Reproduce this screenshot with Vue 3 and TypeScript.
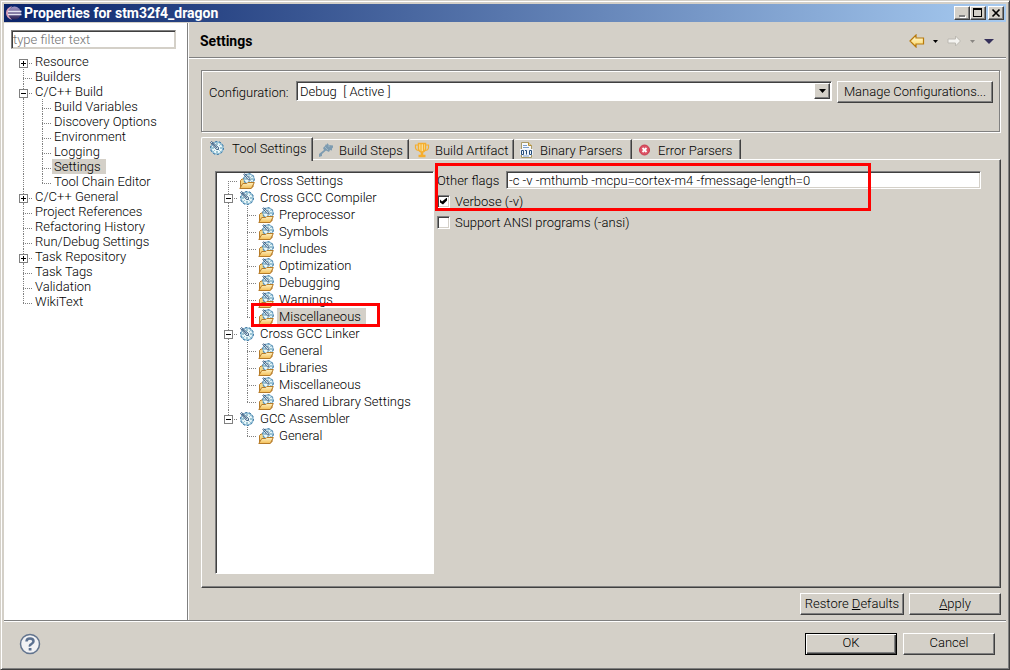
<script setup lang="ts">
import { ref } from 'vue'

type Guide = 'blank' | 'pass' | 'first' | 'tee' | 'end'

interface TreeRow {
  label: string
  guides: Guide[]
  open?: boolean
  toggle?: boolean
  icon?: 'gauge' | 'folder'
  selected?: boolean
  marked?: boolean
}

interface Tab {
  id: string
  label: string
}

const pages: TreeRow[] = [
  { label: 'Resource', guides: ['first'], toggle: true },
  { label: 'Builders', guides: ['tee'] },
  { label: 'C/C++ Build', guides: ['tee'], toggle: true, open: true },
  { label: 'Build Variables', guides: ['pass', 'tee'] },
  { label: 'Discovery Options', guides: ['pass', 'tee'] },
  { label: 'Environment', guides: ['pass', 'tee'] },
  { label: 'Logging', guides: ['pass', 'tee'] },
  { label: 'Settings', guides: ['pass', 'tee'], selected: true },
  { label: 'Tool Chain Editor', guides: ['pass', 'end'] },
  { label: 'C/C++ General', guides: ['tee'], toggle: true },
  { label: 'Project References', guides: ['tee'] },
  { label: 'Refactoring History', guides: ['tee'] },
  { label: 'Run/Debug Settings', guides: ['tee'] },
  { label: 'Task Repository', guides: ['tee'], toggle: true },
  { label: 'Task Tags', guides: ['tee'] },
  { label: 'Validation', guides: ['tee'] },
  { label: 'WikiText', guides: ['end'] },
]

const tools: TreeRow[] = [
  { label: 'Cross Settings', guides: ['first'], icon: 'folder' },
  { label: 'Cross GCC Compiler', guides: ['tee'], toggle: true, open: true, icon: 'gauge' },
  { label: 'Preprocessor', guides: ['pass', 'tee'], icon: 'folder' },
  { label: 'Symbols', guides: ['pass', 'tee'], icon: 'folder' },
  { label: 'Includes', guides: ['pass', 'tee'], icon: 'folder' },
  { label: 'Optimization', guides: ['pass', 'tee'], icon: 'folder' },
  { label: 'Debugging', guides: ['pass', 'tee'], icon: 'folder' },
  { label: 'Warnings', guides: ['pass', 'tee'], icon: 'folder' },
  { label: 'Miscellaneous', guides: ['pass', 'end'], icon: 'folder', selected: true, marked: true },
  { label: 'Cross GCC Linker', guides: ['tee'], toggle: true, open: true, icon: 'gauge' },
  { label: 'General', guides: ['pass', 'tee'], icon: 'folder' },
  { label: 'Libraries', guides: ['pass', 'tee'], icon: 'folder' },
  { label: 'Miscellaneous', guides: ['pass', 'tee'], icon: 'folder' },
  { label: 'Shared Library Settings', guides: ['pass', 'end'], icon: 'folder' },
  { label: 'GCC Assembler', guides: ['end'], toggle: true, open: true, icon: 'gauge' },
  { label: 'General', guides: ['blank', 'end'], icon: 'folder' },
]

const tabs: Tab[] = [
  { id: 'gauge', label: 'Tool Settings' },
  { id: 'steps', label: 'Build Steps' },
  { id: 'trophy', label: 'Build Artifact' },
  { id: 'binary', label: 'Binary Parsers' },
  { id: 'error', label: 'Error Parsers' },
]

const activeTab = ref('gauge')
const filter = ref('')
const flags = ref('-c -v -mthumb -mcpu=cortex-m4 -fmessage-length=0')
const verbose = ref(true)
const ansi = ref(false)
const configuration = ref('debug')
</script>

<template>
  <div class="window">
    <svg class="defs" aria-hidden="true">
      <defs>
        <linearGradient id="folder-fill" x1="0" y1="0" x2="0" y2="1">
          <stop offset="0" stop-color="#fff3c4" />
          <stop offset="1" stop-color="#f3bd55" />
        </linearGradient>
        <linearGradient id="arrow-fill" x1="0" y1="0" x2="0" y2="1">
          <stop offset="0" stop-color="#fffbe0" />
          <stop offset="1" stop-color="#fbd55e" />
        </linearGradient>
        <linearGradient id="globe-fill" x1="0" y1="0" x2="0" y2="1">
          <stop offset="0" stop-color="#a39ac8" />
          <stop offset="1" stop-color="#2c2255" />
        </linearGradient>
        <symbol id="gauge" viewBox="0 0 16 16">
          <circle cx="8" cy="8" r="6" fill="#eaf7fa" stroke="#8dbbd4" stroke-width="1.500" />
          <circle cx="8" cy="8" r="6.500" fill="none" stroke="#3c77a3" stroke-width="1" stroke-dasharray="2 2" />
          <path d="M8 3v2M8 11v2M3 8h2M11 8h2M4.500 11.500l1-1M10.500 5.500l1-1M10.500 10.500l1 1" stroke="#4f93ab" fill="none" />
          <path d="M1.500 2.500l1-1 7 6v2h-2z" fill="#cfe0ea" stroke="#33557a" stroke-width=".9" />
          <path d="M3 3l5 5" stroke="#33557a" stroke-width=".8" />
        </symbol>
        <symbol id="folder" viewBox="0 0 16 16">
          <path d="M1.500 14V7.500L3 6h3l1 2h7v6z" fill="#f6d684" stroke="#b67b28" />
          <circle cx="10" cy="6" r="5" fill="#eaf7fa" stroke="#8dbbd4" stroke-width="1.300" />
          <circle cx="10" cy="6" r="5.300" fill="none" stroke="#3c77a3" stroke-width="1" stroke-dasharray="2 2" />
          <path d="M10 2.500v1.500M10 8v2M12 6h2M6 6h2M11.500 4.500l1-1M11.500 7.500l1 1" stroke="#4f93ab" fill="none" />
          <path d="M4.800 1.500l.8-.8 5.400 4.800v1.500H9.500z" fill="#cfe0ea" stroke="#33557a" stroke-width=".9" />
          <path d="M.8 15.500l3-5h4l1-1h6.500l-3 6z" fill="url(#folder-fill)" stroke="#b67b28" />
        </symbol>
        <symbol id="steps" viewBox="0 0 16 16">
          <path d="M1 15v-3l5-4-1-2 2-2 1-2 1 1V1l2 2 4 .5v2l-1 1v2l-2-.5-1 2-3-1.500-4 3.500v2z" fill="#7d9bb0" />
          <path d="M7 5l3 3M10 4h2" stroke="#a9bfcd" stroke-width=".8" />
        </symbol>
        <symbol id="trophy" viewBox="0 0 16 16">
          <path d="M4.500 1.500h7V7Q11 10 8 10T4.500 7z" fill="#fbe3a0" stroke="#f5ae2e" stroke-width="1.500" />
          <path d="M4 3H1.500v3q.5 2.500 3.500 2.500M12 3h2.500v3q-.5 2.500-3.500 2.500M7 2v7M9.500 2v7" fill="none" stroke="#f5ae2e" stroke-width="1.200" />
          <path d="M8 10v4M4.500 14h7" stroke="#f5ae2e" stroke-width="2.500" />
        </symbol>
        <symbol id="binary" viewBox="0 0 16 16">
          <path d="M2.500.500h7l3 3v12h-10z" fill="#f7f9fc" stroke="#a99a67" />
          <path d="M9.500.500v3h3" fill="#e7d49a" stroke="#b68e35" />
          <path d="M4 3.500h4M4 5.500h6M4 14h6" stroke="#7c9fca" />
          <path d="M1 7h13v6H1z" fill="#eef3f8" />
          <path d="M2.500 8.500h2v4h-2zM6 8.500h1.500v4M10.500 8.500h2v4h-2z" fill="none" stroke="#254d7b" />
        </symbol>
        <symbol id="error" viewBox="0 0 16 16">
          <circle cx="7.500" cy="8" r="5" fill="#dc5265" stroke="#c83a4c" />
          <path d="M5.500 6l4 4M9.500 6l-4 4" stroke="#fff" stroke-width="1.800" />
        </symbol>
      </defs>
    </svg>

    <header class="titlebar">
      <svg class="app-icon" viewBox="0 0 16 16" aria-hidden="true">
        <path d="M6 1Q0 3 0 8t6 7Q3 12 3 8t3-7z" fill="#d9a0b8" />
        <circle cx="8.500" cy="8" r="6.500" fill="url(#globe-fill)" />
        <path d="M2 6.500h13.500M2 9.500h13.500" stroke="#e4e4f2" stroke-width="1.300" />
      </svg>
      <h1>Properties for stm32f4_dragon</h1>
      <button class="caption" type="button" aria-label="Minimize">
        <svg viewBox="0 0 12 10"><path d="M4 8h6v2H4z" fill="#fff" /><path d="M3 7h6v2H3z" fill="#808080" /></svg>
      </button>
      <button class="caption" type="button" aria-label="Maximize">
        <svg viewBox="0 0 12 10"><path d="M1 0h9v9H1zM2 2v6h7V2z" fill-rule="evenodd" /></svg>
      </button>
      <button class="caption close" type="button" aria-label="Close">
        <svg viewBox="0 0 12 10"><path d="M2.500 1.500l7 7M9.500 1.500l-7 7" stroke="#000" stroke-width="1.700" /></svg>
      </button>
    </header>

    <div class="body">
      <nav class="sidebar">
        <input v-model="filter" class="field filter" type="text" placeholder="type filter text" aria-label="Filter" />
        <ul class="tree pages">
          <li v-for="row in pages" :key="row.label" class="row">
            <span v-for="(guide, i) in row.guides" :key="i" class="guide" :class="guide">
              <button
                v-if="row.toggle && i === row.guides.length - 1"
                class="toggle"
                :class="{ open: row.open }"
                type="button"
                :aria-label="'Toggle ' + row.label"
              ></button>
            </span>
            <span class="label" :class="{ selected: row.selected }">{{ row.label }}</span>
          </li>
        </ul>
      </nav>

      <main class="content">
        <div class="heading">
          <h2>Settings</h2>
          <div class="history">
            <button class="flat" type="button" aria-label="Back">
              <svg class="arrow" viewBox="0 0 16 14"><path d="M1 7l6-6v3h7.500v6H7v3z" fill="url(#arrow-fill)" stroke="#b87a0c" stroke-width="1.200" /></svg>
            </button>
            <button class="flat" type="button" aria-label="Back history">
              <svg class="drop" viewBox="0 0 5 3"><path d="M0 0h5L2.500 3z" /></svg>
            </button>
            <button class="flat" type="button" aria-label="Forward">
              <svg class="arrow" viewBox="0 0 16 14"><path d="M14.500 7l-5-5v3H2v4h7.500v3z" fill="#f4f3f0" stroke="#bcb9b2" /></svg>
            </button>
            <button class="flat" type="button" aria-label="Forward history">
              <svg class="drop" viewBox="0 0 5 3"><path d="M0 0h5L2.500 3z" fill="#898682" /></svg>
            </button>
            <button class="flat" type="button" aria-label="Menu">
              <svg class="menu" viewBox="0 0 10 5"><path d="M0 0h10L5 5z" fill="#35305a" /></svg>
            </button>
          </div>
        </div>

        <div class="page">
          <section class="config">
            <label for="configuration">Configuration:</label>
            <div class="combo">
              <select id="configuration" v-model="configuration">
                <option value="debug">Debug&nbsp; [ Active ]</option>
              </select>
              <span class="combo-arrow" aria-hidden="true">
                <svg viewBox="0 0 7 4"><path d="M0 0h7L3.500 4z" /></svg>
              </span>
            </div>
            <button class="push manage" type="button">Manage Configurations...</button>
          </section>

          <div class="tabs" role="tablist">
            <button
              v-for="tab in tabs"
              :key="tab.id"
              class="tab"
              :class="{ active: tab.id === activeTab }"
              type="button"
              role="tab"
              :aria-selected="tab.id === activeTab"
              @click="activeTab = tab.id"
            >
              <svg class="icon" aria-hidden="true"><use :href="'#' + tab.id" /></svg>
              <span>{{ tab.label }}</span>
            </button>
          </div>

          <section class="panel">
            <ul class="tree tools">
              <li v-for="(row, n) in tools" :key="n" class="row">
                <span v-for="(guide, i) in row.guides" :key="i" class="guide" :class="guide">
                  <button
                    v-if="row.toggle && i === row.guides.length - 1"
                    class="toggle"
                    :class="{ open: row.open }"
                    type="button"
                    :aria-label="'Toggle ' + row.label"
                  ></button>
                </span>
                <svg class="icon" aria-hidden="true"><use :href="'#' + row.icon" /></svg>
                <span class="label" :class="{ selected: row.selected }">{{ row.label }}</span>
                <span v-if="row.marked" class="mark row-mark"></span>
              </li>
            </ul>
            <form class="options" @submit.prevent>
              <div class="option">
                <label class="flags-label" for="flags">Other flags</label>
                <input id="flags" v-model="flags" class="field flags" type="text" spellcheck="false" />
              </div>
              <label class="option check"><input v-model="verbose" type="checkbox" />Verbose (-v)</label>
              <label class="option check"><input v-model="ansi" type="checkbox" />Support ANSI programs (-ansi)</label>
              <span class="mark form-mark"></span>
            </form>
          </section>

          <div class="page-actions">
            <button class="push restore" type="button">Restore <u>D</u>efaults</button>
            <button class="push apply" type="button"><u>A</u>pply</button>
          </div>
        </div>
      </main>
    </div>

    <footer class="footer">
      <button class="flat help" type="button" aria-label="Help">
        <svg viewBox="0 0 22 22">
          <circle cx="11" cy="11" r="9.500" fill="#f2f2f4" stroke="#62748e" stroke-width="1.500" />
          <path d="M7.500 8.500Q7.500 5.500 11 5.500t3.500 2.800Q14.500 10 12.500 11T11 13.500" fill="none" stroke="#5c7190" stroke-width="2.500" />
          <rect x="9.700" y="15" width="2.800" height="2.500" fill="#5c7190" />
        </svg>
      </button>
      <button class="push default" type="button">OK</button>
      <button class="push cancel" type="button">Cancel</button>
    </footer>
  </div>
</template>

<style>
html,
body {
  margin: 0;
  background: #d4d0c8;
}
</style>

<style scoped>
* {
  box-sizing: border-box;
}

.window {
  display: flex;
  flex-direction: column;
  min-height: 100vh;
  padding: 2px;
  border: 1px solid;
  border-color: #d4d0c8 #404040 #404040 #d4d0c8;
  box-shadow: inset 1px 1px #fff, inset -1px -1px #808080;
  background: #d4d0c8;
  color: #000;
  font: 300 13px/15px Roboto, "Liberation Sans", sans-serif;
  white-space: nowrap;
}

button,
input,
select {
  font: inherit;
  color: inherit;
}

button {
  padding: 0;
  border: 0;
  border-radius: 0;
  background: #d4d0c8;
}

svg {
  display: block;
}

.defs {
  position: absolute;
  width: 0;
  height: 0;
}

.icon {
  flex: none;
  width: 16px;
  height: 16px;
}

.titlebar {
  display: flex;
  align-items: center;
  height: 18px;
  margin: 1px 1px 0;
  padding: 0 2px;
  background: linear-gradient(to right, #0a246a, #a6caf0);
  color: #fff;
}

.app-icon {
  width: 16px;
  height: 16px;
  margin-right: 2px;
}

h1,
h2 {
  margin: 0;
  flex: 1;
  font: bold 14px/16px Roboto, "Liberation Sans", sans-serif;
}

.caption,
.push,
.combo-arrow {
  border: 1px solid;
  border-color: #fff #404040 #404040 #fff;
  box-shadow: inset -1px -1px #808080;
}

.caption {
  width: 16px;
  height: 14px;
  padding: 1px;
}

.caption svg {
  width: 12px;
  height: 10px;
}

.close {
  margin-left: 2px;
}

.body {
  display: flex;
  flex: 1;
  margin: 1px 1px 0;
  border-bottom: 1px solid #808080;
}

.sidebar {
  flex: none;
  width: 184px;
  padding: 7px;
  border-right: 1px solid #808080;
  background: #fff;
}

.field {
  display: block;
  min-width: 0;
  height: 19px;
  padding: 0 1px;
  border: 1px solid;
  border-color: #808080 #fff #fff #808080;
  border-radius: 0;
  box-shadow: inset 1px 1px #404040, inset -1px -1px #d4d0c8;
  background: #fff;
  outline: 0;
}

.filter {
  width: 165px;
  border-color: #808080 #d4d0c8 #d4d0c8 #808080;
}

.filter::placeholder {
  color: #707070;
  opacity: 1;
}

.tree {
  margin: 0;
  padding: 0;
  list-style: none;
}

.pages {
  padding: 5px 3px;
}

.row {
  position: relative;
  display: flex;
  height: 15px;
}

.guide {
  --line: repeating-linear-gradient(to bottom, #808080 0 1px, transparent 1px 2px);
  --dash: repeating-linear-gradient(to right, #808080 0 1px, transparent 1px 2px);
  flex: none;
  width: 19px;
  padding: 5px;
  background-repeat: no-repeat;
}

.pass {
  background-image: var(--line);
  background-size: 1px 100%;
  background-position: 9px 0;
}

.tee,
.first,
.end {
  background-image: var(--line), var(--dash);
  background-size: 1px 100%, 10px 1px;
  background-position: 9px 0, 9px 9px;
}

.first {
  background-size: 1px 8px, 10px 1px;
  background-position: 9px 9px, 9px 9px;
}

.end {
  background-size: 1px 9px, 10px 1px;
}

.toggle {
  display: block;
  width: 9px;
  height: 9px;
  border: 1px solid #808080;
  background: linear-gradient(#000, #000) center / 5px 1px no-repeat,
    linear-gradient(#000, #000) center / 1px 5px no-repeat, #fff;
}

.toggle.open {
  background: linear-gradient(#000, #000) center / 5px 1px no-repeat, #fff;
}

.label {
  padding: 0 2px;
}

.selected {
  padding-right: 5px;
  background: #d4d0c8;
}

.content {
  display: flex;
  flex: 1;
  flex-direction: column;
  min-width: 0;
  border-left: 1px solid #fff;
}

.heading {
  display: flex;
  align-items: center;
  height: 35px;
  padding: 2px 12px 0 11px;
  border-bottom: 1px solid #808080;
  box-shadow: 0 1px #fff;
}

.history {
  display: flex;
  align-items: center;
}

.flat {
  background: none;
}

.arrow {
  width: 16px;
  height: 14px;
}

.drop {
  width: 5px;
  height: 3px;
  margin: 0 8px;
}

.menu {
  width: 10px;
  height: 5px;
  margin-left: 1px;
}

.page {
  display: flex;
  flex: 1;
  flex-direction: column;
  padding: 12px 5px 5px 12px;
}

.config {
  display: flex;
  gap: 5px;
  height: 62px;
  margin-right: 1px;
  padding: 10px 6px 10px 7px;
  border: 1px solid #808080;
  box-shadow: 1px 1px #fff, inset 1px 1px #fff;
}

.config label {
  width: 82px;
  padding-top: 4px;
}

.combo {
  display: flex;
  flex: 1;
  height: 20px;
  padding: 1px;
  border: 1px solid;
  border-color: #808080 #fff #fff #808080;
  box-shadow: inset 1px 1px #404040;
  background: #fff;
}

.combo select {
  flex: 1;
  min-width: 0;
  padding: 0 2px;
  border: 0;
  background: #fff;
  appearance: none;
  outline: 0;
}

.combo-arrow {
  display: grid;
  place-items: center;
  width: 16px;
  background: #d4d0c8;
  pointer-events: none;
}

.combo-arrow svg {
  width: 7px;
  height: 4px;
}

.push {
  height: 22px;
  padding: 0 0 2px;
}

.manage {
  width: 156px;
}

.tabs {
  display: grid;
  grid-template-columns: 112px 96px 105px 118px 109px;
  align-items: end;
  height: 22px;
  margin-top: 5px;
}

.tab {
  display: flex;
  align-items: center;
  gap: 5px;
  height: 20px;
  padding: 1px 0 0 5px;
  border: solid;
  border-color: #fff #404040 #fff #fff;
  border-width: 1px 1px 0 0;
  border-radius: 2px 0 0;
  box-shadow: inset -1px 0 #808080;
}

.tab.active {
  position: relative;
  gap: 7px;
  height: 24px;
  margin-bottom: -2px;
  padding: 0 0 3px 7px;
  border-left-width: 1px;
}

.panel {
  display: flex;
  flex: 1;
  padding: 11px 19px 13px 13px;
  border: 1px solid;
  border-color: #fff #404040 #404040 #fff;
  box-shadow: inset -1px -1px #808080;
}

.tools {
  flex: none;
  width: 219px;
  padding: 0 3px;
  border: 1px solid;
  border-color: #808080 #fff #fff #808080;
  box-shadow: inset 1px 1px #404040;
  background: #fff;
}

.tools .row {
  height: 17px;
}

.tools .icon {
  margin: 1px 2px 0 1px;
}

.tools .label {
  margin-left: 1px;
  line-height: 17px;
}

.options {
  position: relative;
  flex: 1;
  padding-left: 3px;
}

.option {
  display: flex;
  align-items: center;
  height: 18px;
  margin-bottom: 3px;
}

.flags-label {
  flex: none;
  width: 69px;
}

.flags {
  flex: 1;
  height: 18px;
  padding: 0 2px;
}

.check {
  gap: 5px;
}

.check input {
  appearance: none;
  width: 13px;
  height: 13px;
  margin: 0;
  border: 1px solid;
  border-color: #808080 #fff #fff #808080;
  box-shadow: inset 1px 1px #404040, inset -1px -1px #d4d0c8;
  background: #fff;
}

.check input:checked::before {
  content: "";
  display: block;
  width: 7px;
  height: 7px;
  margin: 2px;
  background: #000;
  clip-path: polygon(0 2px, 2px 4px, 7px 0, 7px 3px, 3px 7px, 0 5px);
}

.mark {
  position: absolute;
  border: 3px solid #f00;
  pointer-events: none;
}

.row-mark {
  top: -5px;
  left: 32px;
  width: 129px;
  height: 24px;
}

.form-mark {
  top: -8px;
  left: 1px;
  width: 436px;
  height: 48px;
}

.page-actions {
  display: flex;
  justify-content: flex-end;
  gap: 5px;
  margin-top: 5px;
}

.restore {
  width: 104px;
}

.apply,
.default,
.cancel {
  width: 92px;
}

.footer {
  display: flex;
  align-items: center;
  gap: 6px;
  height: 46px;
  margin: 0 1px;
  padding: 0 11px 2px 15px;
  border-top: 1px solid #fff;
}

.help {
  margin-right: auto;
}

.help svg {
  width: 22px;
  height: 22px;
}

.default {
  border-color: #000;
  box-shadow: inset 1px 1px #fff, inset -1px -1px #404040, inset -2px -2px #808080;
}
</style>
